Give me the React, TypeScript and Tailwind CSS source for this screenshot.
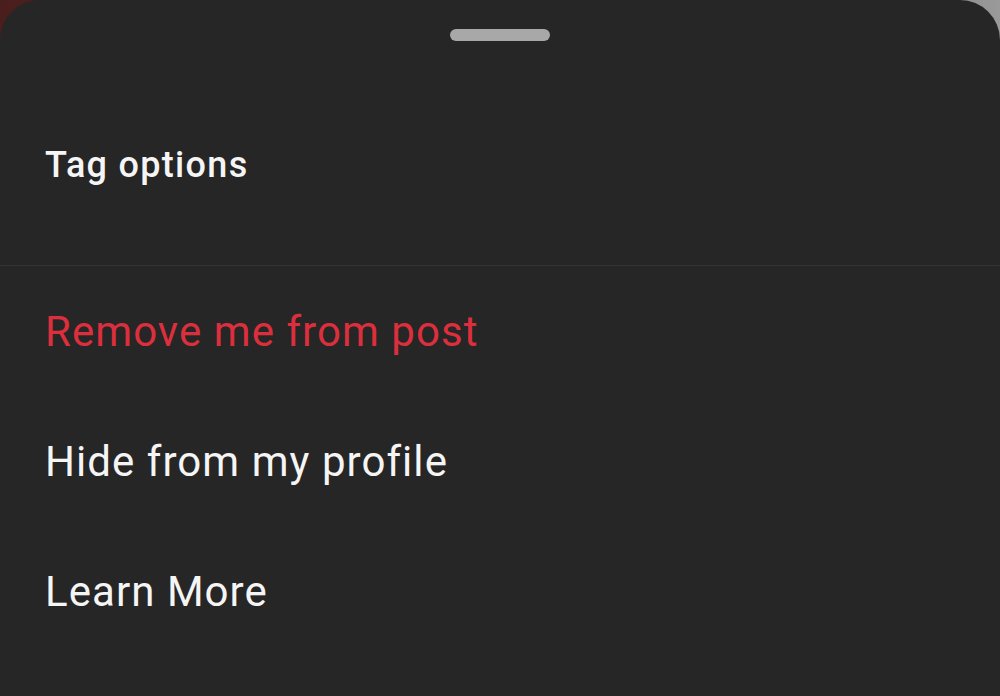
export default function App() {
  const items = [
    { label: "Remove me from post", danger: true },
    { label: "Hide from my profile", danger: false },
    { label: "Learn More", danger: false },
  ];

  return (
    <div className="w-[1000px] h-[696px] overflow-hidden bg-[linear-gradient(90deg,#4a1e1c_0%,#3a2a2a_40%,#6a6a6a_80%,#9a9a9a_100%)] font-['Roboto',sans-serif]">
      <div className="w-full h-full bg-[#262626] rounded-t-[40px] flex flex-col">
        {/* drag handle */}
        <div className="flex justify-center pt-[29px]">
          <div className="w-[100px] h-[12px] rounded-full bg-[#a8a8a8]" />
        </div>

        {/* header */}
        <div className="px-[45px] pt-[103px] pb-[79px] border-b border-[#333333]">
          <h2 className="text-[36px] leading-[42px] font-medium tracking-[1.3px] text-[#f5f5f5]">Tag options</h2>
        </div>

        {/* options */}
        <ul className="flex flex-col">
          {items.map((item) => (
            <li
              key={item.label}
              className={`h-[130px] flex items-center px-[45px] text-[42px] tracking-[1.05px] ${
                item.danger ? "text-[#dc2f3d]" : "text-[#f5f5f5]"
              }`}
            >
              {item.label}
            </li>
          ))}
        </ul>
      </div>
    </div>
  );
}
